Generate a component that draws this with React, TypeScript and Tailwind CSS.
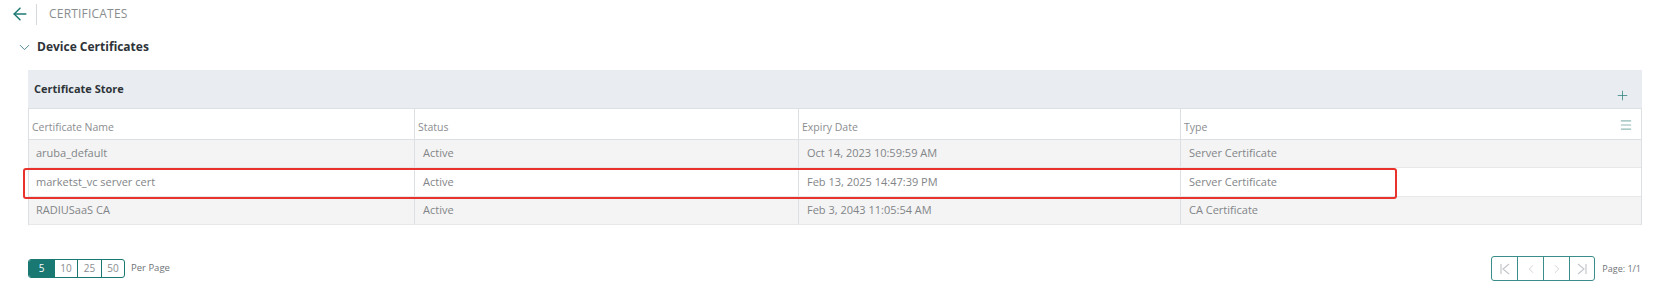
import React from 'react';
import { ArrowLeft, ChevronDown, Plus, Menu, ChevronLeft, ChevronRight } from 'lucide-react';

const rows = [
  { name: 'aruba_default', status: 'Active', expiry: 'Oct 14, 2023 10:59:59 AM', type: 'Server Certificate' },
  { name: 'marketst_vc server cert', status: 'Active', expiry: 'Feb 13, 2025 14:47:39 PM', type: 'Server Certificate', marked: true },
  { name: 'RADIUSaaS CA', status: 'Active', expiry: 'Feb 3, 2043 11:05:54 AM', type: 'CA Certificate' },
];

const cols = 'grid grid-cols-[385px_384px_382px_1fr]';

function FirstIcon() {
  return (
    <svg width="14" height="14" viewBox="0 0 14 14" fill="none" stroke="#c4c8cc" strokeWidth="1.2">
      <path d="M3 2v10M11 2L5 7l6 5" />
    </svg>
  );
}

function LastIcon() {
  return (
    <svg width="14" height="14" viewBox="0 0 14 14" fill="none" stroke="#c4c8cc" strokeWidth="1.2">
      <path d="M11 2v10M3 2l6 5-6 5" />
    </svg>
  );
}

export default function App() {
  return (
    <div className="w-[1660px] h-[304px] bg-white font-['Open_Sans',sans-serif] overflow-hidden">
      {/* Top bar */}
      <div className="flex items-center h-[28px] pl-[10px]">
        <ArrowLeft className="w-[20px] h-[20px] text-[#1f7a74]" strokeWidth={1.8} />
        <div className="w-px h-[21px] bg-[#d6d9dc] ml-[6px] mr-[12px]" />
        <span className="text-[12px] text-[#8a8d90] tracking-[0.2px]">CERTIFICATES</span>
      </div>

      {/* Section title */}
      <div className="flex items-center h-[36px] pl-[16px] pt-[2px]">
        <ChevronDown className="w-[17px] h-[17px] text-[#3f7f8a]" strokeWidth={1.3} />
        <span className="ml-[4px] text-[12px] font-bold text-[#2d3338]">Device Certificates</span>
      </div>

      {/* Panel */}
      <div className="ml-[28px] mr-[18px] mt-[6px] relative">
        <div className="h-[38px] bg-[#e9edf1] flex items-start justify-between pl-[6px] pr-[12px]">
          <span className="mt-[11px] text-[11px] font-bold text-[#2d3338]">Certificate Store</span>
          <Plus className="mt-[18px] w-[15px] h-[15px] text-[#2a7f7a]" strokeWidth={1.2} />
        </div>

        <div className="border-l border-r border-[#dde0e3]">
          <div className={`${cols} h-[32px] border-t border-b border-[#dde0e3] text-[10.5px] text-[#8a8d90]`}>
            <div className="pl-[3px] pt-[11px]">Certificate Name</div>
            <div className="pl-[3px] pt-[11px] border-l border-[#dde0e3]">Status</div>
            <div className="pl-[3px] pt-[11px] border-l border-[#dde0e3]">Expiry Date</div>
            <div className="pl-[3px] pt-[11px] border-l border-[#dde0e3] flex justify-between pr-[8px]">
              <span>Type</span>
              <Menu className="w-[14px] h-[14px] text-[#8fbab5] -mt-[2px]" strokeWidth={2} />
            </div>
          </div>
          {rows.map((r) => (
            <div
              key={r.name}
              className={`${cols} items-center text-[11px] text-[#828588] border-b border-[#e6e8ea] ${r.marked ? 'bg-white h-[29px]' : 'bg-[#f4f4f4] h-[28px]'}`}
            >
              <div className="pl-[7px] h-full flex items-center">{r.name}</div>
              <div className="pl-[8px] h-full flex items-center border-l border-[#dde0e3]">{r.status}</div>
              <div className="pl-[8px] h-full flex items-center border-l border-[#dde0e3]">{r.expiry}</div>
              <div className="pl-[8px] h-full flex items-center border-l border-[#dde0e3]">{r.type}</div>
            </div>
          ))}
        </div>

        {/* highlight annotation */}
        <div className="absolute left-[-5px] top-[98px] w-[1374px] h-[31px] border-2 border-[#e8322b] rounded-[3px] pointer-events-none" />
      </div>

      {/* Footer pagination */}
      <div className="flex items-center justify-between ml-[28px] mr-[19px] mt-[31px]">
        <div className="flex items-center">
          <div className="flex h-[19px] border border-[#1a7873] rounded-[3px] overflow-hidden text-[10px]">
            <div className="w-[25px] flex items-center justify-center bg-[#1a7873] text-white">5</div>
            <div className="w-[23px] flex items-center justify-center text-[#8a8d90] border-l border-[#1a7873]">10</div>
            <div className="w-[24px] flex items-center justify-center text-[#8a8d90] border-l border-[#1a7873]">25</div>
            <div className="w-[23px] flex items-center justify-center text-[#8a8d90] border-l border-[#1a7873]">50</div>
          </div>
          <span className="ml-[6px] text-[9.5px] text-[#6f7377]">Per Page</span>
        </div>
        <div className="flex items-center">
          <div className="flex h-[25px] border border-[#3a8d88] rounded-[3px] overflow-hidden">
            <div className="w-[25px] flex items-center justify-center"><FirstIcon /></div>
            <div className="w-[26px] flex items-center justify-center border-l border-[#3a8d88]">
              <ChevronLeft className="w-[14px] h-[14px] text-[#c4c8cc]" strokeWidth={1.3} />
            </div>
            <div className="w-[26px] flex items-center justify-center border-l border-[#3a8d88]">
              <ChevronRight className="w-[14px] h-[14px] text-[#c4c8cc]" strokeWidth={1.3} />
            </div>
            <div className="w-[25px] flex items-center justify-center border-l border-[#3a8d88]"><LastIcon /></div>
          </div>
          <span className="ml-[7px] text-[9px] text-[#6f7377]">Page: 1/1</span>
        </div>
      </div>
    </div>
  );
}
